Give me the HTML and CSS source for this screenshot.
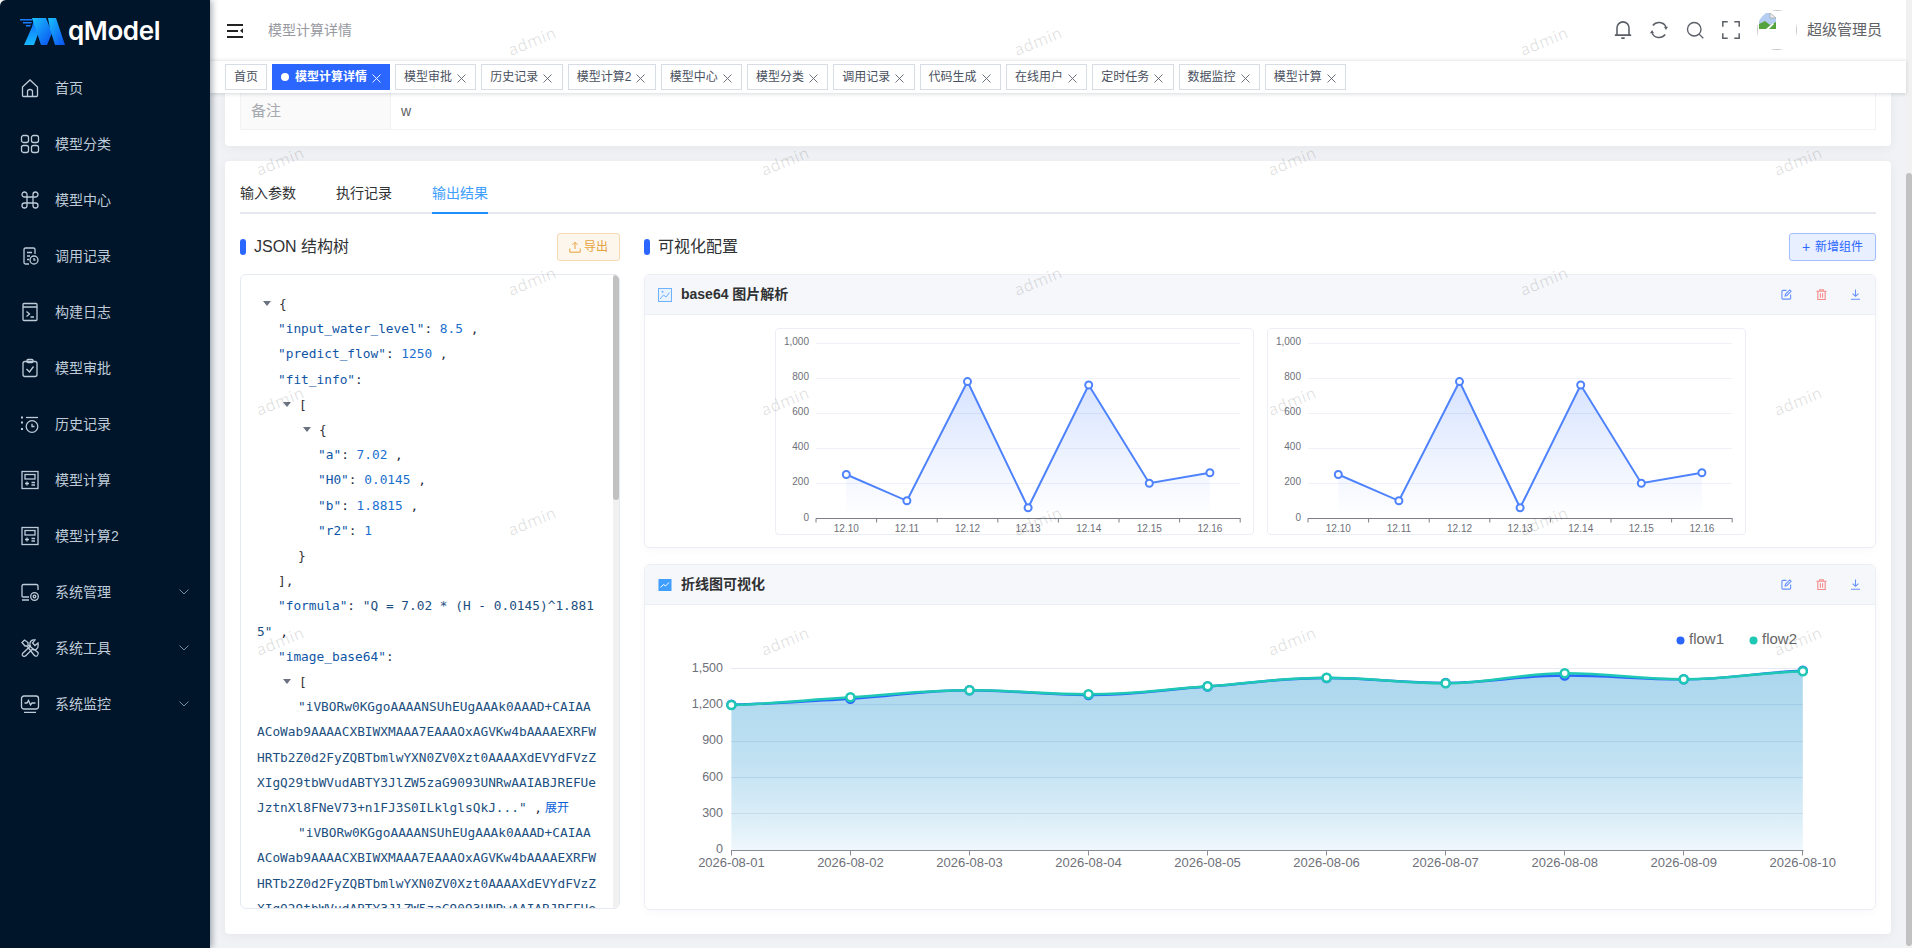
FILE: index.html
```html
<!doctype html>
<html>
<head>
	<meta charset="utf-8" />
	<title>模型计算详情</title>
	<link rel="stylesheet" href="styles.css">
</head>
<body>
	<svg class="sprite">
		<symbol id="i-x" viewBox="0 0 9 9"><path d="M.5 .5l8 8M8.5 .5l-8 8"/></symbol>
		<symbol id="i-home" viewBox="0 0 20 20"><path d="M2.5 9L10 2l7.5 7v8.5q0 1-1 1h-13q-1 0-1-1zM7.5 18.5v-5q0-2 2.5-2t2.5 2v5"/></symbol>
		<symbol id="i-grid" viewBox="0 0 20 20"><rect x="1.5" y="1.5" width="7" height="7" rx="2"/><rect x="11.5" y="1.5" width="7" height="7" rx="2"/><rect x="1.5" y="11.5" width="7" height="7" rx="2"/><rect x="11.5" y="11.5" width="7" height="7" rx="2"/></symbol>
		<symbol id="i-cmd" viewBox="0 0 20 20"><path d="M7 7V4.5A2.5 2.5 0 1 0 4.5 7H15.5A2.5 2.5 0 1 0 13 4.5V15.5A2.5 2.5 0 1 0 15.5 13H4.5A2.5 2.5 0 1 0 7 15.5Z"/></symbol>
		<symbol id="i-rec" viewBox="0 0 20 20"><path d="M15 8V3.5Q15 2 13.5 2h-8Q4 2 4 3.5v13Q4 18 5.5 18H9M7 6.5h5M7 10h3M7 13.5h2"/><circle cx="14" cy="14" r="4"/><path d="M14 12v2h1.5"/></symbol>
		<symbol id="i-build" viewBox="0 0 20 20"><rect x="3" y="1.5" width="14" height="17" rx="1"/><path d="M3 5h14M6.5 9.5L9.5 12l-3 2.5M10.5 15H14"/></symbol>
		<symbol id="i-check" viewBox="0 0 20 20"><rect x="3" y="3.5" width="14" height="15" rx="2"/><rect x="7" y="1.5" width="6" height="3" rx="1"/><path d="M6.5 11l3 3 4-5.500"/></symbol>
		<symbol id="i-hist" viewBox="0 0 20 20"><path d="M1 3.5h2M1 8.5h2M1 15h2" stroke-width="2.2"/><path d="M6 3.5h12"/><circle cx="12" cy="12.5" r="5.8"/><path d="M12 9.8v2.700h2.500"/></symbol>
		<symbol id="i-calc" viewBox="0 0 20 20"><rect x="2" y="1.5" width="16" height="17"/><rect x="5" y="4.5" width="10" height="4.5"/><path d="M5 13.5h4M7 11.5v4M11.5 12.5H15M11.5 15H15"/></symbol>
		<symbol id="i-sys" viewBox="0 0 20 20"><path d="M18 8V4q0-1.5-1.5-1.5h-13Q2 2.5 2 4v10q0 1 1 1h6M2 18h7"/><circle cx="14.5" cy="14.5" r="3.8"/><circle cx="14.5" cy="14.5" r="1.3"/></symbol>
		<symbol id="i-tool" viewBox="0 0 20 20"><path d="M2 4.5L4.5 2 8 4.5V7l10 7.5q.8 2-.8 3.2-1.700 1.200-3.200-.7L7 8H5zM18 5l-3 2.5L12.500 5 15 2q-4-1-5 3-.5 2 .5 3L2.500 15.500q-1 1.500.5 2.500 1.500 1 3-.5L12 11.500q4 1.500 5.800-2 .7-2.500.2-4.500z"/></symbol>
		<symbol id="i-mon" viewBox="0 0 20 20"><rect x="1.5" y="2" width="17" height="13" rx="2.5"/><path d="M4.5 9H7l1.5-2.5 2 4.5L12 9h3.500M4 18.300h12"/></symbol>
		<symbol id="i-edit" viewBox="0 0 12 12"><path d="M6 1.5H2q-1 0-1 1v7.500q0 1 1 1h7.500q1 0 1-1V6"/><path d="M4.500 7.500l.5-2L9.500 1l1.500 1.500L6.500 7z"/></symbol>
		<symbol id="i-del" viewBox="0 0 12 12"><path d="M.5 2.500h11M4 2.500V.8h4v1.700M2 2.500v9h8v-9M4.800 4.500v5M7.200 4.500v5"/></symbol>
		<symbol id="i-down" viewBox="0 0 12 12"><path d="M6 .5v7.500M2.800 5L6 8l3.200-3M1 11.200h10"/></symbol>
	</svg>

	<aside class="sidebar">
		<div class="logo">
			<svg class="logo-mark" viewBox="0 0 46 28">
				<defs>
					<linearGradient id="lg1" x1="0" y1="0" x2="0" y2="1"><stop offset="0" stop-color="#0f6bff"/><stop offset="1" stop-color="#16b8ff"/></linearGradient>
					<linearGradient id="lg2" x1="0" y1="0" x2="1" y2="1"><stop offset="0" stop-color="#19c2ff"/><stop offset="1" stop-color="#0b4ff0"/></linearGradient>
				</defs>
				<path d="M1 1h13l-1 1.5H1zM4 4h9l-1 1.5H4zM7 7h5l-1 1.5H7z" fill="#1a7cff"/>
				<polygon points="5,27 15,27 23,5 15,1 13,9" fill="url(#lg1)"/>
				<polygon points="13,0 27,0 33,15 28,27 22,27" fill="url(#lg2)"/>
				<polygon points="29,0 37,0 46,27 36,27 31,11" fill="url(#lg2)"/>
			</svg>
			<span class="logo-text">qModel</span>
		</div>
		<nav class="menu">
			<a class="menu-item"><svg class="menu-icon"><use href="#i-home"/></svg>首页</a>
			<a class="menu-item"><svg class="menu-icon"><use href="#i-grid"/></svg>模型分类</a>
			<a class="menu-item"><svg class="menu-icon"><use href="#i-cmd"/></svg>模型中心</a>
			<a class="menu-item"><svg class="menu-icon"><use href="#i-rec"/></svg>调用记录</a>
			<a class="menu-item"><svg class="menu-icon"><use href="#i-build"/></svg>构建日志</a>
			<a class="menu-item"><svg class="menu-icon"><use href="#i-check"/></svg>模型审批</a>
			<a class="menu-item"><svg class="menu-icon"><use href="#i-hist"/></svg>历史记录</a>
			<a class="menu-item"><svg class="menu-icon"><use href="#i-calc"/></svg>模型计算</a>
			<a class="menu-item"><svg class="menu-icon"><use href="#i-calc"/></svg>模型计算2</a>
			<a class="menu-item"><svg class="menu-icon"><use href="#i-sys"/></svg>系统管理<svg class="chevron" viewBox="0 0 10 6"><path d="M.5 .5L5 5 9.5 .5"/></svg></a>
			<a class="menu-item"><svg class="menu-icon"><use href="#i-tool"/></svg>系统工具<svg class="chevron" viewBox="0 0 10 6"><path d="M.5 .5L5 5 9.5 .5"/></svg></a>
			<a class="menu-item"><svg class="menu-icon"><use href="#i-mon"/></svg>系统监控<svg class="chevron" viewBox="0 0 10 6"><path d="M.5 .5L5 5 9.5 .5"/></svg></a>
		</nav>
	</aside>

	<div class="main">
		<header class="topbar">
			<svg class="hamburger" viewBox="0 0 16 14"><path d="M0 0h16v2H0zM0 6h11v2H0zM0 12h16v2H0zM16 4.300v5L13 6.800z"/></svg>
			<span class="crumb">模型计算详情</span>
			<div class="top-tools">
				<svg class="tool" viewBox="1.5 2 21 21"><path d="M5 18V10a7 7 0 0 1 14 0v8M2.5 18.500h19M10 22h4"/></svg>
				<svg class="tool" viewBox="1 1 22 22"><path d="M4.500 6.500A9.500 9.500 0 0 1 20.500 8M19.500 17.500A9.500 9.500 0 0 1 3.500 16"/><path class="tool-fill" d="M18 8h5l-2.500 4zM1 16h5l-2.500-4z"/></svg>
				<svg class="tool" viewBox="0 0 24 24"><circle cx="11" cy="11" r="9"/><path d="M17.500 17.500L23 23"/></svg>
				<svg class="tool" viewBox="1 1 22 22"><path d="M2 8V2h6M16 2h6v6M22 16v6h-6M8 22H2v-6"/></svg>
				<div class="avatar">
					<div class="avatar-frame">
						<svg class="broken" viewBox="0 0 17 16"><path d="M0 0h11l6 5v11H0z" fill="#b4cdf0"/><path d="M0 16v-5l6-3 5 4 6-3v7z" fill="#55a33c"/><path d="M7 16l7-6 1 1-5 5z" fill="#fff"/><path d="M11 0l6 5h-6z" fill="#eee" stroke="#999" stroke-width=".6"/></svg>
					</div>
				</div>
				<span class="user-name">超级管理员</span>
			</div>
		</header>
		<div class="tabs">
			<a class="tab tab-plain">首页</a>
			<a class="tab tab-active"><i class="tab-dot"></i>模型计算详情<svg class="tab-x"><use href="#i-x"/></svg></a>
			<a class="tab">模型审批<svg class="tab-x"><use href="#i-x"/></svg></a>
			<a class="tab">历史记录<svg class="tab-x"><use href="#i-x"/></svg></a>
			<a class="tab">模型计算2<svg class="tab-x"><use href="#i-x"/></svg></a>
			<a class="tab">模型中心<svg class="tab-x"><use href="#i-x"/></svg></a>
			<a class="tab">模型分类<svg class="tab-x"><use href="#i-x"/></svg></a>
			<a class="tab">调用记录<svg class="tab-x"><use href="#i-x"/></svg></a>
			<a class="tab">代码生成<svg class="tab-x"><use href="#i-x"/></svg></a>
			<a class="tab">在线用户<svg class="tab-x"><use href="#i-x"/></svg></a>
			<a class="tab">定时任务<svg class="tab-x"><use href="#i-x"/></svg></a>
			<a class="tab">数据监控<svg class="tab-x"><use href="#i-x"/></svg></a>
			<a class="tab">模型计算<svg class="tab-x"><use href="#i-x"/></svg></a>
		</div>

		<div class="content">
			<section class="card card-top">
				<div class="desc-row">
					<div class="desc-label">备注</div>
					<div class="desc-value">w</div>
				</div>
			</section>

			<section class="card card-result">
				<div class="result-tabs">
					<a class="result-tab">输入参数</a>
					<a class="result-tab">执行记录</a>
					<a class="result-tab result-tab-on">输出结果</a>
				</div>
				<div class="result-cols">
					<div class="col-json">
						<div class="sec-head">
							<h3 class="sec-title"><i class="sec-mark"></i>JSON 结构树</h3>
							<a class="btn btn-export"><svg class="btn-icon" viewBox="0 0 12 12"><path d="M6 8V1.500M3.500 3.800L6 1.300l2.500 2.500M.8 7.500v3.700h10.400V7.500"/></svg>导出</a>
						</div>
						<div class="json-box">
							<div class="json-body">
								<div class="jl l1"><i class="arrow"></i><b class="br">{</b></div>
								<div class="jl l1"><span class="k">"input_water_level"</span>: <span class="n">8.5</span> ,</div>
								<div class="jl l1"><span class="k">"predict_flow"</span>: <span class="n">1250</span> ,</div>
								<div class="jl l1"><span class="k">"fit_info"</span>:</div>
								<div class="jl l2"><i class="arrow"></i><b class="br">[</b></div>
								<div class="jl l3"><i class="arrow"></i><b class="br">{</b></div>
								<div class="jl l3"><span class="k">"a"</span>: <span class="n">7.02</span> ,</div>
								<div class="jl l3"><span class="k">"H0"</span>: <span class="n">0.0145</span> ,</div>
								<div class="jl l3"><span class="k">"b"</span>: <span class="n">1.8815</span> ,</div>
								<div class="jl l3"><span class="k">"r2"</span>: <span class="n">1</span></div>
								<div class="jl l2"><b class="br">}</b></div>
								<div class="jl l1"><b class="br">]</b>,</div>
								<div class="jl l1"><span class="k">"formula"</span>: <span class="s">"Q = 7.02 * (H - 0.0145)^1.8815"</span> ,</div>
								<div class="jl l1"><span class="k">"image_base64"</span>:</div>
								<div class="jl l2"><i class="arrow"></i><b class="br">[</b></div>
								<div class="jl l2"><span class="s">"iVBORw0KGgoAAAANSUhEUgAAAk0AAAD+CAIAAACoWab9AAAACXBIWXMAAA7EAAAOxAGVKw4bAAAAEXRFWHRTb2Z0d2FyZQBTbmlwYXN0ZV0Xzt0AAAAXdEVYdFVzZXIgQ29tbWVudABTY3JlZW5zaG9093UNRwAAIABJREFUeJztnXl8FNeV73+n1FJ3S0ILklglsQkJ..."</span> ,<a class="more">展开</a></div>
								<div class="jl l2"><span class="s">"iVBORw0KGgoAAAANSUhEUgAAAk0AAAD+CAIAAACoWab9AAAACXBIWXMAAA7EAAAOxAGVKw4bAAAAEXRFWHRTb2Z0d2FyZQBTbmlwYXN0ZV0Xzt0AAAAXdEVYdFVzZXIgQ29tbWVudABTY3JlZW5zaG9093UNRwAAIABJREFUeJztnXl8FNeV73+n1FJ3S0ILklglsQkJ..."</span></div>
							</div>
							<div class="json-bar"><div class="json-thumb"></div></div>
						</div>
					</div>

					<div class="col-vis">
						<div class="sec-head">
							<h3 class="sec-title"><i class="sec-mark"></i>可视化配置</h3>
							<a class="btn btn-add"><span class="plus">+</span>新增组件</a>
						</div>

						<div class="widget">
							<div class="widget-head">
								<svg class="widget-icon" viewBox="0 0 14 14"><rect x=".5" y=".5" width="13" height="13" fill="#e8f3ff" stroke="#6cb2ff"/><path d="M2 11l3.500-4 2.500 2 3.500-4.500" fill="none" stroke="#6cb2ff"/><circle cx="4.500" cy="3.800" r="1" fill="#6cb2ff"/></svg>
								<span class="widget-title">base64 图片解析</span>
								<div class="widget-ops">
									<svg class="op op-blue"><use href="#i-edit"/></svg>
									<svg class="op op-red"><use href="#i-del"/></svg>
									<svg class="op op-blue"><use href="#i-down"/></svg>
								</div>
							</div>
							<div class="widget-imgs">
								<div class="mini-chart">
									<svg class="mini-svg" viewBox="1 1 477 205">
										<defs><linearGradient id="ga" x1="0" y1="45" x2="0" y2="184" gradientUnits="userSpaceOnUse"><stop offset="0" stop-color="#4e83fd" stop-opacity=".24"/><stop offset="1" stop-color="#4e83fd" stop-opacity=".01"/></linearGradient></defs>
										<path class="mgrid" d="M41 15.500H465M41 50.500H465M41 85.500H465M41 120.500H465M41 155.500H465"/>
										<path d="M71.300 146.500L131.900 172.800 192.500 53.600 253.100 179.800 313.700 57 374.300 155.200 434.900 144.700V184H71.300Z" fill="url(#ga)"/>
										<path class="maxis" d="M41 190.500H465.500M41 190.500v4M101.600 190.500v4M162.200 190.500v4M222.800 190.500v4M283.400 190.500v4M344 190.500v4M404.600 190.500v4M465.200 190.500v4"/>
										<path class="mline" d="M71.300 146.500L131.900 172.800 192.500 53.600 253.100 179.800 313.700 57 374.300 155.200 434.900 144.700"/>
										<g class="mdots"><circle cx="71.300" cy="146.500" r="3.500"/><circle cx="131.900" cy="172.800" r="3.500"/><circle cx="192.500" cy="53.600" r="3.500"/><circle cx="253.100" cy="179.800" r="3.500"/><circle cx="313.700" cy="57" r="3.500"/><circle cx="374.300" cy="155.200" r="3.500"/><circle cx="434.900" cy="144.700" r="3.500"/></g>
										<g class="mlab-y"><text x="34" y="17">1,000</text><text x="34" y="52">800</text><text x="34" y="87">600</text><text x="34" y="122">400</text><text x="34" y="157">200</text><text x="34" y="193">0</text></g>
										<g class="mlab-x"><text x="71.300" y="204">12.10</text><text x="131.900" y="204">12.11</text><text x="192.500" y="204">12.12</text><text x="253.100" y="204">12.13</text><text x="313.700" y="204">12.14</text><text x="374.300" y="204">12.15</text><text x="434.900" y="204">12.16</text></g>
									</svg>
								</div>
								<div class="mini-chart">
									<svg class="mini-svg" viewBox="1 1 477 205">
										<path class="mgrid" d="M41 15.500H465M41 50.500H465M41 85.500H465M41 120.500H465M41 155.500H465"/>
										<path d="M71.300 146.500L131.900 172.800 192.500 53.600 253.100 179.800 313.700 57 374.300 155.200 434.900 144.700V184H71.300Z" fill="url(#ga)"/>
										<path class="maxis" d="M41 190.500H465.500M41 190.500v4M101.600 190.500v4M162.200 190.500v4M222.800 190.500v4M283.400 190.500v4M344 190.500v4M404.600 190.500v4M465.200 190.500v4"/>
										<path class="mline" d="M71.300 146.500L131.900 172.800 192.500 53.600 253.100 179.800 313.700 57 374.300 155.200 434.900 144.700"/>
										<g class="mdots"><circle cx="71.300" cy="146.500" r="3.500"/><circle cx="131.900" cy="172.800" r="3.500"/><circle cx="192.500" cy="53.600" r="3.500"/><circle cx="253.100" cy="179.800" r="3.500"/><circle cx="313.700" cy="57" r="3.500"/><circle cx="374.300" cy="155.200" r="3.500"/><circle cx="434.900" cy="144.700" r="3.500"/></g>
										<g class="mlab-y"><text x="34" y="17">1,000</text><text x="34" y="52">800</text><text x="34" y="87">600</text><text x="34" y="122">400</text><text x="34" y="157">200</text><text x="34" y="193">0</text></g>
										<g class="mlab-x"><text x="71.300" y="204">12.10</text><text x="131.900" y="204">12.11</text><text x="192.500" y="204">12.12</text><text x="253.100" y="204">12.13</text><text x="313.700" y="204">12.14</text><text x="374.300" y="204">12.15</text><text x="434.900" y="204">12.16</text></g>
									</svg>
								</div>
							</div>
						</div>

						<div class="widget">
							<div class="widget-head">
								<svg class="widget-icon" viewBox="0 0 14 14"><rect x=".5" y="1" width="13" height="12" fill="#409eff"/><path d="M2.500 9.500l3-3 2 1.500 3.500-3.500" fill="none" stroke="#fff"/></svg>
								<span class="widget-title">折线图可视化</span>
								<div class="widget-ops">
									<svg class="op op-blue"><use href="#i-edit"/></svg>
									<svg class="op op-red"><use href="#i-del"/></svg>
									<svg class="op op-blue"><use href="#i-down"/></svg>
								</div>
							</div>
							<svg class="flow-svg" viewBox="645 606 1230 303">
								<defs><linearGradient id="gb" x1="0" y1="671" x2="0" y2="850" gradientUnits="userSpaceOnUse"><stop offset="0" stop-color="#1f94d1" stop-opacity=".38"/><stop offset=".5" stop-color="#1f94d1" stop-opacity=".28"/><stop offset=".85" stop-color="#1f94d1" stop-opacity=".15"/><stop offset="1" stop-color="#1f94d1" stop-opacity=".07"/></linearGradient></defs>
								<path class="fgrid" d="M731 668.500H1803M731 704.500H1803M731 741.500H1803M731 777.500H1803M731 813.500H1803"/>
								<path fill="url(#gb)" d="M731.400 705C779.400 703.500 802.400 700.200 850.400 697.300C898.400 694.400 921.500 690.300 969.500 690.300C1017.500 690.300 1040.500 694.300 1088.500 694.300C1136.500 694.300 1159.600 689.600 1207.600 686.300C1255.600 683 1278.600 677.700 1326.600 677.700C1374.600 677.700 1397.600 683.300 1445.600 683.300C1493.600 683.300 1516.700 673.300 1564.700 673.300C1612.700 673.300 1635.700 679.300 1683.700 679.300C1731.700 679.300 1754.800 672.900 1802.800 671.300V850.500H731.400Z"/>
								<path class="faxis" d="M731 850.500H1803.500M731.500 850.500v5M850.500 850.500v5M969.500 850.500v5M1088.500 850.500v5M1207.500 850.500v5M1326.500 850.500v5M1445.500 850.500v5M1564.500 850.500v5M1683.500 850.500v5M1802.500 850.500v5"/>
								<path class="fline-a" d="M731.400 704.700C779.400 703.500 802.400 701.600 850.400 698.700C898.400 695.800 921.500 690.200 969.500 690.200C1017.500 690.200 1040.500 695 1088.500 695C1136.500 695 1159.600 689.900 1207.600 686.500C1255.600 683.100 1278.600 678 1326.600 678C1374.600 678 1397.600 682.900 1445.600 682.900C1493.600 682.900 1516.700 675.600 1564.700 675.600C1612.700 675.600 1635.700 679.300 1683.700 679.300C1731.700 679.300 1754.800 672.500 1802.800 670.800"/>
								<g class="fdots-a"><circle cx="731.400" cy="704.700" r="4"/><circle cx="850.400" cy="698.700" r="4"/><circle cx="969.500" cy="690.200" r="4"/><circle cx="1088.500" cy="695" r="4"/><circle cx="1207.600" cy="686.500" r="4"/><circle cx="1326.600" cy="678" r="4"/><circle cx="1445.600" cy="682.900" r="4"/><circle cx="1564.700" cy="675.600" r="4"/><circle cx="1683.700" cy="679.300" r="4"/><circle cx="1802.800" cy="670.800" r="4"/></g>
								<path class="fline-b" d="M731.400 705C779.400 703.500 802.400 700.200 850.400 697.300C898.400 694.400 921.500 690.300 969.500 690.300C1017.500 690.300 1040.500 694.300 1088.500 694.300C1136.500 694.300 1159.600 689.600 1207.600 686.300C1255.600 683 1278.600 677.700 1326.600 677.700C1374.600 677.700 1397.600 683.300 1445.600 683.300C1493.600 683.300 1516.700 673.300 1564.700 673.300C1612.700 673.300 1635.700 679.300 1683.700 679.300C1731.700 679.300 1754.800 672.900 1802.800 671.300"/>
								<g class="fdots-b"><circle cx="731.400" cy="705" r="4"/><circle cx="850.400" cy="697.300" r="4"/><circle cx="969.500" cy="690.300" r="4"/><circle cx="1088.500" cy="694.300" r="4"/><circle cx="1207.600" cy="686.300" r="4"/><circle cx="1326.600" cy="677.700" r="4"/><circle cx="1445.600" cy="683.300" r="4"/><circle cx="1564.700" cy="673.300" r="4"/><circle cx="1683.700" cy="679.300" r="4"/><circle cx="1802.800" cy="671.300" r="4"/></g>
								<g class="flab-y"><text x="723" y="672">1,500</text><text x="723" y="708">1,200</text><text x="723" y="744">900</text><text x="723" y="781">600</text><text x="723" y="817">300</text><text x="723" y="853">0</text></g>
								<g class="flab-x"><text x="731.400" y="867">2026-08-01</text><text x="850.400" y="867">2026-08-02</text><text x="969.500" y="867">2026-08-03</text><text x="1088.500" y="867">2026-08-04</text><text x="1207.600" y="867">2026-08-05</text><text x="1326.600" y="867">2026-08-06</text><text x="1445.600" y="867">2026-08-07</text><text x="1564.700" y="867">2026-08-08</text><text x="1683.700" y="867">2026-08-09</text><text x="1802.800" y="867">2026-08-10</text></g>
								<circle cx="1680.500" cy="640.500" r="4" fill="#2b66ff"/>
								<text class="flegend" x="1689" y="644">flow1</text>
								<circle cx="1753.500" cy="640.500" r="4" fill="#1fc7b5"/>
								<text class="flegend" x="1762" y="644">flow2</text>
							</svg>
						</div>
					</div>
				</div>
			</section>
		</div>
	</div>

	<div class="scrollbar"><div class="scrollbar-thumb"></div></div>

	<!-- watermark lies over everything but the sidebar -->
	<svg class="watermark" viewBox="0 0 1912 720">
		<g>
			<text transform="translate(510 55) rotate(-22)">admin</text>
			<text transform="translate(1016 55) rotate(-22)">admin</text>
			<text transform="translate(1522 55) rotate(-22)">admin</text>
			<text transform="translate(258 175) rotate(-22)">admin</text>
			<text transform="translate(763 175) rotate(-22)">admin</text>
			<text transform="translate(1270 175) rotate(-22)">admin</text>
			<text transform="translate(1776 175) rotate(-22)">admin</text>
			<text transform="translate(510 295) rotate(-22)">admin</text>
			<text transform="translate(1016 295) rotate(-22)">admin</text>
			<text transform="translate(1522 295) rotate(-22)">admin</text>
			<text transform="translate(258 415) rotate(-22)">admin</text>
			<text transform="translate(763 415) rotate(-22)">admin</text>
			<text transform="translate(1270 415) rotate(-22)">admin</text>
			<text transform="translate(1776 415) rotate(-22)">admin</text>
			<text transform="translate(510 535) rotate(-22)">admin</text>
			<text transform="translate(1016 535) rotate(-22)">admin</text>
			<text transform="translate(1522 535) rotate(-22)">admin</text>
			<text transform="translate(258 655) rotate(-22)">admin</text>
			<text transform="translate(763 655) rotate(-22)">admin</text>
			<text transform="translate(1270 655) rotate(-22)">admin</text>
			<text transform="translate(1776 655) rotate(-22)">admin</text>
		</g>
	</svg>
</body>
</html>
```

FILE: styles.css
```css
* { box-sizing: border-box; }
html, body { height: 100%; }
body { margin: 0; display: flex; overflow: hidden; background: #fff; font: 14px/1.5 "Liberation Sans", "Noto Sans CJK SC", sans-serif; color: #303133; }
a { cursor: pointer; }
.sprite { display: none; }

/* sidebar */
.sidebar { position: relative; z-index: 5; flex: 0 0 210px; height: 948px; background: #001529; border-top-left-radius: 6px; box-shadow: 2px 0 6px rgba(0, 21, 41, .35); }
.logo { height: 60px; display: flex; align-items: center; padding: 0 0 0 19px; }
.logo-mark { width: 46px; height: 28px; margin-top: 3px; }
.logo-text { margin-left: 3px; font: 600 26px/1 "Inter", sans-serif; color: #fff; letter-spacing: -.4px; margin-top: 2px; }
.menu-item { height: 56px; display: flex; align-items: center; padding-left: 20px; color: #bfcbd9; }
.menu-icon { width: 20px; height: 20px; margin-right: 15px; fill: none; stroke: #bfcbd9; stroke-width: 1.3; }
.chevron { width: 10px; height: 6px; margin-left: auto; margin-right: 21px; fill: none; stroke: #7f8c9c; stroke-width: 1; }

/* main column */
.main { flex: 0 0 1696px; height: 948px; display: flex; flex-direction: column; background: #f0f2f5; }
.topbar { flex: 0 0 60px; display: flex; align-items: center; padding: 0 24px 0 17px; background: #fff; }
.hamburger { width: 16px; height: 14px; fill: #222; margin-top: 1px; }
.crumb { margin-left: 25px; color: #97999f; }
.top-tools { margin-left: auto; display: flex; align-items: center; }
.tool { width: 18px; height: 18px; margin-right: 18px; fill: none; stroke: #5a5e66; stroke-width: 1.8; }
.tool-fill { fill: #5a5e66; stroke: none; }
.avatar { width: 40px; height: 40px; margin-left: -1px; border-radius: 50%; overflow: hidden; }
.avatar-frame { width: 40px; height: 40px; border: 1px solid #c8c8c8; padding: 2px 0 0 1px; }
.broken { display: block; width: 17px; height: 16px; }
.user-name { margin-left: 10px; font-size: 15px; color: #606266; }

.tabs { position: relative; z-index: 3; flex: 0 0 33px; display: flex; gap: 5px; padding: 3px 15px; background: #fff; border-top: 1px solid #f0f0f0; box-shadow: 0 1px 4px rgba(0, 21, 41, .16); }
.tab { height: 26px; display: flex; align-items: center; padding: 0 8px; border: 1px solid #d8dce5; font-size: 12px; color: #495060; background: #fff; white-space: nowrap; }
.tab-x { width: 9px; height: 9px; margin: 2px 1.3px 0 5px; fill: none; stroke: #5f6570; stroke-width: .9; }
.tab-active { background: #2b66ff; border-color: #2b66ff; color: #fff; font-weight: bold; }
.tab-active .tab-x { stroke: #fff; margin-right: 0; }
.tab-dot { width: 8px; height: 8px; border-radius: 50%; background: #fff; margin-right: 6px; }

.content { flex: 1; padding: 0 15px; overflow: hidden; }
.card { background: #fff; border-radius: 4px; box-shadow: 0 2px 12px rgba(0, 0, 0, .05); }
.card-top { height: 53px; padding: 0 15px; border-top-left-radius: 0; border-top-right-radius: 0; }
.desc-row { height: 37px; display: flex; border: 1px solid #f0f2f6; border-top: 0; }
.desc-label { width: 150px; padding-left: 10px; line-height: 35px; background: #fafafa; font-size: 15px; color: #a6a9ad; border-right: 1px solid #f0f2f6; }
.desc-value { padding-left: 10px; line-height: 36px; color: #606266; }

.card-result { margin-top: 15px; height: 773px; padding: 13px 15px 0; }
.result-tabs { display: flex; gap: 40px; height: 40px; border-bottom: 2px solid #e4e7ed; }
.result-tab { height: 40px; line-height: 38px; color: #303133; }
.result-tab-on { color: #409eff; border-bottom: 2px solid #1f8fff; }
.result-cols { display: flex; gap: 24px; margin-top: 19px; }
.col-json { flex: 0 0 380px; }
.col-vis { flex: 1; }
.sec-head { height: 28px; display: flex; align-items: center; justify-content: space-between; margin-bottom: 13px; }
.sec-title { margin: 0; display: flex; align-items: center; font-size: 16px; font-weight: normal; color: #303133; }
.sec-mark { width: 6px; height: 16px; border-radius: 3px; background: #2b66ff; margin-right: 8px; }
.btn { height: 28px; display: flex; align-items: center; justify-content: center; border-radius: 3px; font-size: 12px; }
.btn-export { width: 63px; background: #fdf6ec; border: 1px solid #f5dab1; color: #e6a23c; }
.btn-icon { width: 12px; height: 12px; margin-right: 3px; fill: none; stroke: #e6a23c; stroke-width: 1; }
.btn-add { width: 87px; background: #e8efff; border: 1px solid #a3bdff; color: #2b66ff; }
.plus { margin-right: 5px; font-size: 14px; }

/* json tree */
.json-box { height: 635px; display: flex; border: 1px solid #e4e9f2; border-radius: 6px; overflow: hidden; }
.json-body { flex: 1; min-width: 0; padding: 16px 16px 0; font: 12.8px/25.2px "DejaVu Sans Mono", monospace; color: #1f2d3d; }
.jl { word-break: break-all; }
.l1 { text-indent: 21px; }
.l2 { text-indent: 41px; }
.l3 { text-indent: 61px; }
.k { color: #0f55a5; }
.n { color: #1a6fcf; }
.s { color: #1c4f80; }
.br { font-weight: normal; color: #333; }
.arrow { display: inline-block; width: 0; height: 0; margin: 0 8px 2px -15px; border: 4px solid transparent; border-top: 5.5px solid #6b7280; border-bottom: 0; }
.more { margin-left: 3px; color: #0b5fd8; font: 12px "Noto Sans CJK SC", sans-serif; }
.json-bar { flex: 0 0 6px; background: #f1f1f1; }
.json-thumb { height: 225px; background: #c1c1c1; border-radius: 3px; }

/* widgets */
.widget { background: #fff; border: 1px solid #ebeef5; border-radius: 6px; margin-bottom: 16px; overflow: hidden; box-shadow: 0 2px 10px rgba(0, 0, 0, .03); }
.widget-head { height: 40px; display: flex; align-items: center; padding: 0 14px 0 13px; background: #f5f7fb; border-bottom: 1px solid #ebeef5; }
.widget-icon { width: 14px; height: 14px; margin-right: 9px; }
.widget-title { font-weight: bold; font-size: 14px; color: #303133; }
.widget-ops { margin-left: auto; display: flex; gap: 23.5px; }
.op { width: 11px; height: 11px; fill: none; stroke-width: 1.2; }
.op-blue { stroke: #6690ff; }
.op-red { stroke: #f78989; }
.widget-imgs { display: flex; justify-content: center; gap: 13px; padding: 13px 0 12px; }
.mini-chart { width: 479px; height: 207px; border: 1px solid #ebeef5; border-radius: 4px; }
.mini-svg { display: block; width: 477px; height: 205px; }
.mgrid { fill: none; stroke: #eef1f8; }
.maxis { fill: none; stroke: #7c7f88; }
.mline { fill: none; stroke: #4e83fd; stroke-width: 2; }
.mdots circle { fill: #fff; stroke: #4e83fd; stroke-width: 2; }
.mlab-y text, .mlab-x text { font: 10px "Liberation Sans", sans-serif; fill: #6e7079; }
.mlab-y text { text-anchor: end; }
.mlab-x text { text-anchor: middle; }
.flow-svg { display: block; width: 1230px; height: 303px; margin-top: 1px; }
.fgrid { fill: none; stroke: #e6e9f2; }
.faxis { fill: none; stroke: #8a8d96; }
.fline-a { fill: none; stroke: #2b66ff; stroke-width: 2.5; }
.fline-b { fill: none; stroke: #1fc7b5; stroke-width: 2.5; }
.fdots-a circle { fill: #fff; stroke: #2b66ff; stroke-width: 2.5; }
.fdots-b circle { fill: #fff; stroke: #1fc7b5; stroke-width: 2.5; }
.flab-y text, .flab-x text { font: 13px "Liberation Sans", sans-serif; fill: #6e7079; }
.flab-y text { text-anchor: end; font-size: 12.5px; }
.flab-x text { text-anchor: middle; }
.flegend { font: 15px "Liberation Sans", sans-serif; fill: #666; }

/* page scrollbar */
.scrollbar { flex: 0 0 6px; height: 948px; background: #f1f1f1; padding-top: 173px; }
.scrollbar-thumb { height: 773px; background: #c1c1c1; border-radius: 3px; }

.watermark { position: absolute; left: 1px; top: 1px; z-index: 4; width: 1912px; height: 720px; pointer-events: none; }
.watermark text { font: 16px "Open Sans", sans-serif; fill: rgba(0, 0, 0, .13); letter-spacing: .6px; }
```
